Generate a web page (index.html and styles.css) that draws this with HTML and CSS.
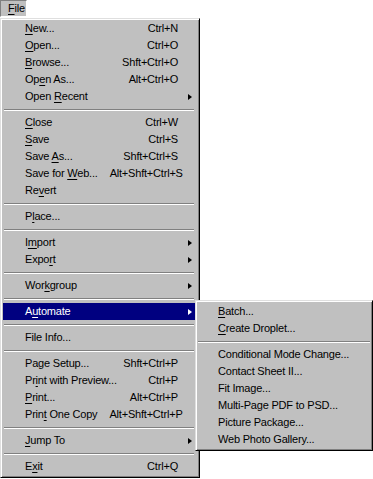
FILE: index.html
```html
<!DOCTYPE html>
<html lang="en">
<head>
	<meta charset="utf-8">
	<title>File menu</title>
	<link rel="stylesheet" href="styles.css">
</head>
<body>
	<div class="menubar">
		<span class="menubar_item"><u>F</u>ile</span>
	</div>

	<ul class="menu mainMenu">
		<li class="item"><span class="label"><u>N</u>ew...</span><span class="key">Ctrl+N</span></li>
		<li class="item"><span class="label"><u>O</u>pen...</span><span class="key">Ctrl+O</span></li>
		<li class="item"><span class="label"><u>B</u>rowse...</span><span class="key">Shft+Ctrl+O</span></li>
		<li class="item"><span class="label">Op<u>e</u>n As...</span><span class="key">Alt+Ctrl+O</span></li>
		<li class="item"><span class="label">Open <u>R</u>ecent</span><span class="arrow"></span></li>
		<li class="sep"></li>
		<li class="item"><span class="label"><u>C</u>lose</span><span class="key">Ctrl+W</span></li>
		<li class="item"><span class="label"><u>S</u>ave</span><span class="key">Ctrl+S</span></li>
		<li class="item"><span class="label">Save <u>A</u>s...</span><span class="key">Shft+Ctrl+S</span></li>
		<li class="item"><span class="label">Save for <u>W</u>eb...</span><span class="key">Alt+Shft+Ctrl+S</span></li>
		<li class="item"><span class="label">Re<u>v</u>ert</span></li>
		<li class="sep"></li>
		<li class="item"><span class="label">P<u>l</u>ace...</span></li>
		<li class="sep"></li>
		<li class="item"><span class="label">I<u>m</u>port</span><span class="arrow"></span></li>
		<li class="item"><span class="label">Expo<u>r</u>t</span><span class="arrow"></span></li>
		<li class="sep"></li>
		<li class="item"><span class="label">Wor<u>k</u>group</span><span class="arrow"></span></li>
		<li class="sep"></li>
		<li class="item active"><span class="label">A<u>u</u>tomate</span><span class="arrow"></span>
			<ul class="menu subMenu">
				<li class="item"><span class="label"><u>B</u>atch...</span></li>
				<li class="item"><span class="label"><u>C</u>reate Droplet...</span></li>
				<li class="sep"></li>
				<li class="item"><span class="label">Conditional Mode Change...</span></li>
				<li class="item"><span class="label">Contact Sheet II...</span></li>
				<li class="item"><span class="label">Fit Image...</span></li>
				<li class="item"><span class="label">Multi-Page PDF to PSD...</span></li>
				<li class="item"><span class="label">Picture Package...</span></li>
				<li class="item"><span class="label">Web Photo Gallery...</span></li>
			</ul>
		</li>
		<li class="sep"></li>
		<li class="item"><span class="label">File Info...</span></li>
		<li class="sep"></li>
		<li class="item"><span class="label">Page Setup...</span><span class="key">Shft+Ctrl+P</span></li>
		<li class="item"><span class="label">Pr<u>i</u>nt with Preview...</span><span class="key">Ctrl+P</span></li>
		<li class="item"><span class="label"><u>P</u>rint...</span><span class="key">Alt+Ctrl+P</span></li>
		<li class="item"><span class="label">Prin<u>t</u> One Copy</span><span class="key">Alt+Shft+Ctrl+P</span></li>
		<li class="sep"></li>
		<li class="item"><span class="label"><u>J</u>ump To</span><span class="arrow"></span></li>
		<li class="sep"></li>
		<li class="item"><span class="label">E<u>x</u>it</span><span class="key">Ctrl+Q</span></li>
	</ul>
</body>
</html>
```

FILE: styles.css
```css
html, body{ margin:0; background:#fff; }
body{ font-family:"Liberation Sans", Arial, sans-serif; font-size:11px; letter-spacing:-0.2px; color:#000; }
u{ text-underline-offset:2px; }

.menubar{ display:flex; height:17px; }
.menubar_item{
	width:27px; box-sizing:border-box;
	border:1px solid; border-color:#808080 #fff #fff #808080;
	background:#c0c0c0;
	line-height:15px; padding-left:7px;
}

.menu{
	list-style:none; margin:0; padding:2px;
	background:#c0c0c0;
	border:1px solid; border-color:#dfdfdf #000 #000 #dfdfdf;
	box-shadow:inset 1px 1px #fff, inset -1px -1px #808080;
}
.mainMenu{ width:200px; box-sizing:border-box; margin-top:1px; padding-top:1px; padding-right:4px; }
.subMenu{
	position:absolute; left:192px; top:-3px;
	width:178px; box-sizing:border-box;
	color:#000;
}

.item{
	position:relative;
	display:flex; align-items:center;
	height:17px; line-height:17px;
	padding:0 17px 0 22px;
	white-space:nowrap;
}
.subMenu .item{ padding-left:20px; }
.key{ margin-left:auto; padding-left:12px; }
.arrow{
	margin-left:auto; margin-right:-14px;
	width:0; height:0;
	border-left:4px solid #000;
	border-top:3.5px solid transparent; border-bottom:3.5px solid transparent;
}

.active{ background:#000080; color:#fff; }
.active > .arrow{ border-left-color:#fff; }

.sep{ height:0; margin:4px 1px 3px; border-top:1px solid #808080; border-bottom:1px solid #fff; }
.subMenu .sep{ margin:4px 0 3px; }
```
